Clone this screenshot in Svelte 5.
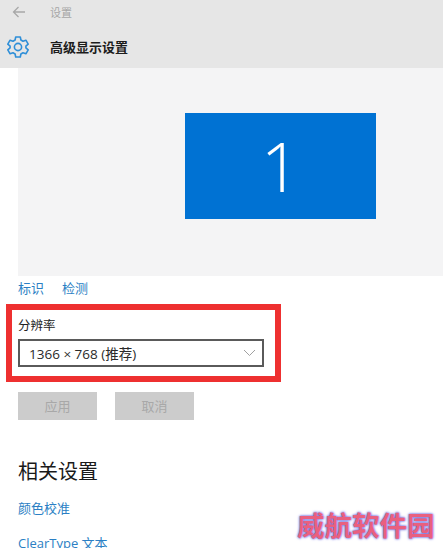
<script>
  const links = ['标识', '检测'];
</script>

<div class="page">
  <header class="header">
    <div class="nav">
      <svg class="back" width="14" height="12" viewBox="0 0 14 12" fill="none" stroke="#a8a8a8" stroke-width="1.3">
        <path d="M13 6H1.5M6.5 1 1.5 6l5 5" />
      </svg>
      <span class="crumb">设置</span>
    </div>
    <div class="titlebar">
      <svg class="gear" width="24" height="24" viewBox="0 0 24 24" fill="none" stroke="#2f8fd8" stroke-width="1.6" stroke-linejoin="round">
        <path d="M9.7 2h4.6l.6 3 2.1 1.2 2.9-1 2.3 4-2.3 2V12.800l2.300 2-2.300 4-2.900-1-2.100 1.200-.6 3H9.700l-.6-3L7 17.800l-2.900 1-2.300-4 2.300-2V11.200l-2.300-2 2.300-4 2.900 1 2.100-1.200z" />
        <circle cx="12" cy="12" r="3.600" />
      </svg>
      <h1>高级显示设置</h1>
    </div>
  </header>

  <main class="content">
    <div class="preview">
      <div class="monitor">1</div>
    </div>

    <div class="links">
      {#each links as link}
        <span class="link">{link}</span>
      {/each}
    </div>

    <div class="resolution">
      <div class="highlight"></div>
      <div class="label">分辨率</div>
      <div class="select">
        <span>1366 × 768 (推荐)</span>
        <svg width="13" height="8" viewBox="0 0 13 8" fill="none" stroke="#a0a0a0" stroke-width="1">
          <path d="M1 1l5.500 5.500L12 1" />
        </svg>
      </div>
    </div>

    <div class="buttons">
      <div class="btn">应用</div>
      <div class="btn">取消</div>
    </div>

    <h2>相关设置</h2>
    <div class="link related first">颜色校准</div>
    <div class="link related second">ClearType 文本</div>
  </main>

  <div class="watermark">威航软件园</div>
</div>

<style>
  :global(body) {
    margin: 0;
    background: #fff;
  }

  .page {
    position: relative;
    width: 443px;
    height: 548px;
    overflow: hidden;
    background: #fff;
    font-family: "Noto Sans CJK SC", "Liberation Sans", sans-serif;
  }

  .header {
    height: 68px;
    padding-left: 12px;
    background: #e6e6e6;
    box-sizing: border-box;
  }

  .nav {
    display: flex;
    align-items: center;
    height: 24px;
  }

  .crumb {
    margin-left: 24px;
    font-size: 11px;
    color: #a6a6a6;
  }

  .titlebar {
    display: flex;
    align-items: center;
    height: 46px;
    margin-left: -6px;
  }

  .gear {
    flex: none;
  }

  h1 {
    margin: 0 0 2px 20px;
    font-size: 13px;
    font-weight: 700;
    color: #1c1c1c;
  }

  .content {
    padding-left: 18px;
  }

  .preview {
    display: flex;
    height: 208px;
    background: #f4f4f5;
    box-sizing: border-box;
    padding: 45px 0 0 167px;
  }

  .monitor {
    width: 191px;
    height: 106px;
    background: #0072d3;
    color: #fff;
    font-family: "Open Sans", "Liberation Sans", sans-serif;
    font-weight: 300;
    font-size: 69px;
    line-height: 104px;
    text-align: center;
  }

  .links {
    display: flex;
    gap: 18px;
    margin-top: 2px;
    height: 18px;
    align-items: center;
  }

  .link {
    font-size: 13px;
    color: #2b7fc4;
  }

  .resolution {
    position: relative;
    margin-top: 20px;
    width: 246px;
  }

  .highlight {
    position: absolute;
    left: -12px;
    top: -12px;
    width: 275px;
    height: 78px;
    box-sizing: border-box;
    border: 6px solid #ee3030;
    pointer-events: none;
  }

  .label {
    height: 17px;
    line-height: 17px;
    font-size: 12.500px;
    color: #222;
  }

  .select {
    display: flex;
    align-items: center;
    justify-content: space-between;
    height: 28px;
    margin-top: 6px;
    padding: 0 6px 0 9px;
    box-sizing: border-box;
    border: 2px solid #5a5a5a;
    font-size: 13.500px;
    color: #2a2a2a;
    font-family: "Open Sans", "Noto Sans CJK SC", sans-serif;
  }

  .buttons {
    display: flex;
    gap: 18px;
    margin-top: 25px;
  }

  .btn {
    width: 79px;
    height: 28px;
    line-height: 28px;
    text-align: center;
    background: #cccccc;
    color: #a8a8a8;
    font-size: 13px;
  }

  h2 {
    margin: 37px 0 0;
    height: 28px;
    line-height: 28px;
    font-size: 20px;
    font-weight: 400;
    color: #1a1a1a;
  }

  .related {
    height: 18px;
    line-height: 18px;
  }

  .first {
    margin-top: 14px;
  }

  .second {
    margin-top: 17px;
    font-family: "Open Sans", "Noto Sans CJK SC", sans-serif;
  }

  .watermark {
    position: absolute;
    left: 297px;
    top: 506px;
    font-family: "Noto Sans CJK SC", sans-serif;
    font-weight: 700;
    font-size: 27.500px;
    line-height: 36px;
    white-space: nowrap;
    color: #e9607f;
    text-shadow: 0 0 3px #6f6fe0, 0 0 2px #6f6fe0;
  }
</style>
